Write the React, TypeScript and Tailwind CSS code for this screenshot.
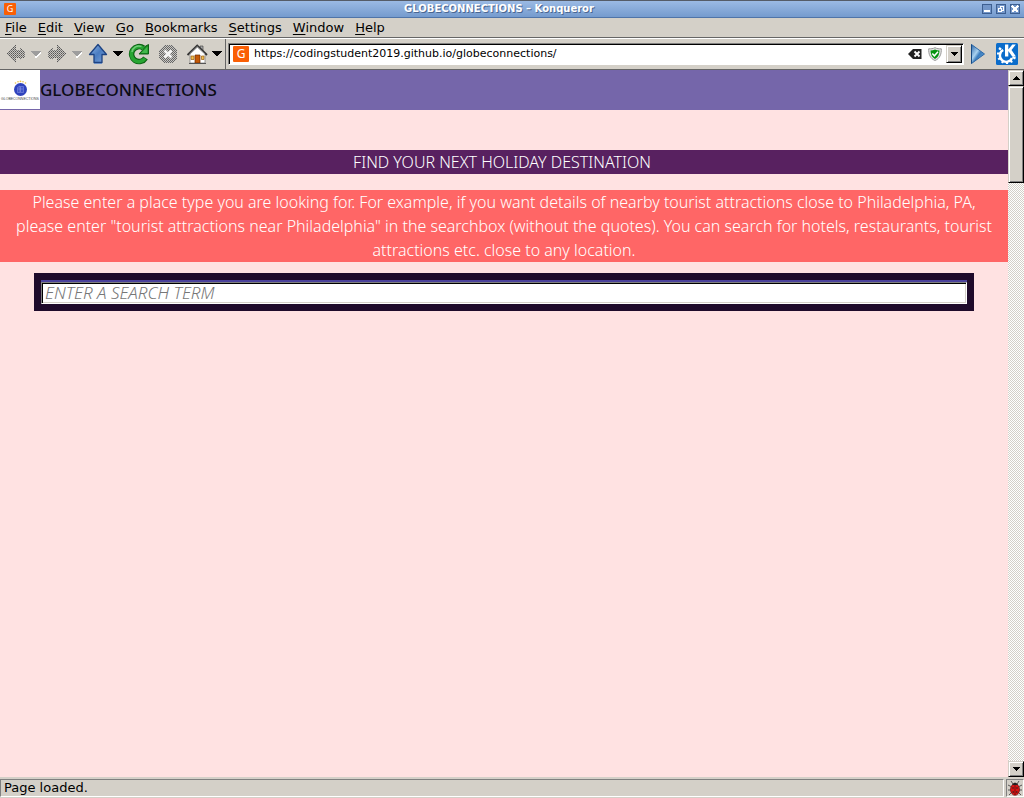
import React from "react";

type IconProps = { className?: string };

const Caret = ({ muted = false }: { muted?: boolean }) => (
  <svg viewBox="0 0 11 7" className="h-[7px] w-[11px] shrink-0" shapeRendering="crispEdges">
    {muted && <path d="M3 6L10 0V2L6 7H5Z" fill="#fff" />}
    <path d="M0 0H10L5 6Z" fill={muted ? "#9d9d9d" : "#000"} />
  </svg>
);

const BackIcon = ({ flip = false }: { flip?: boolean }) => (
  <svg viewBox="0 0 22 22" className={flip ? "size-[22px] -scale-x-100" : "size-[22px]"}>
    <defs>
      <pattern id="stipple" width="2" height="2" patternUnits="userSpaceOnUse">
        <rect width="2" height="2" fill="#c9c6c0" />
        <rect width="1" height="1" fill="#555" />
        <rect x="1" y="1" width="1" height="1" fill="#777" />
      </pattern>
    </defs>
    <path d="M1 11L11 2V7H15V5L20 8V14L15 17V15H11V20Z" fill="url(#stipple)" shapeRendering="crispEdges" />
  </svg>
);

const UpIcon = () => (
  <svg viewBox="0 0 22 22" className="size-[22px]">
    <defs>
      <linearGradient id="up" x1="0" x2="1" y1="0" y2="1">
        <stop offset="0" stopColor="#8fb6e8" />
        <stop offset=".5" stopColor="#4a7cc0" />
        <stop offset="1" stopColor="#7ba4db" />
      </linearGradient>
    </defs>
    <path d="M11 1.5L19.500 11.500H15V19.500H7V11.500H2.500Z" fill="url(#up)" stroke="#1d4382" strokeWidth="1.300" strokeLinejoin="round" />
    <path d="M7 20.500H15" stroke="#6c8fc4" />
  </svg>
);

const ReloadIcon = () => (
  <svg viewBox="0 0 22 22" className="size-[22px]">
    <path d="M17.500 15A7.500 7.500 0 1 1 15.500 5" fill="none" stroke="#0d6214" strokeWidth="5.500" />
    <path d="M20.500 1.500V11H11L14 7.800L17 3.500Z" fill="#168b20" stroke="#0d6214" strokeLinejoin="round" />
    <path d="M17 15.500A7.500 7.500 0 1 1 15.500 5.300" fill="none" stroke="#27a532" strokeWidth="3.600" />
    <path d="M4 9A7 7 0 0 1 13.500 3.500" fill="none" stroke="#71cc78" strokeWidth="1.500" />
    <path d="M19.500 3.500V10H13L16.500 6.500Z" fill="#42b94c" />
  </svg>
);

const StopIcon = () => (
  <svg viewBox="0 0 22 22" className="size-[22px]">
    <defs>
      <pattern id="stop" width="2" height="2" patternUnits="userSpaceOnUse">
        <rect width="2" height="2" fill="#c8c6c2" />
        <rect width="1" height="1" fill="#666" />
        <rect x="1" y="1" width="1" height="1" fill="#666" />
      </pattern>
    </defs>
    <path d="M7 2H15L20 7V15L15 20H7L2 15V7Z" fill="url(#stop)" shapeRendering="crispEdges" />
    <path d="M7.500 7.500L14.500 14.500M14.500 7.500L7.500 14.500" stroke="#f4f4f4" strokeWidth="2.600" />
  </svg>
);

const HomeIcon = () => (
  <svg viewBox="0 0 22 22" className="size-[22px]">
    <path d="M14 3H17V8H14Z" fill="#aaa" stroke="#333" strokeWidth=".6" />
    <path d="M4 11V20H19V11L11.500 4Z" fill="#fff" stroke="#777" strokeWidth=".7" />
    <path d="M1.500 12L11.200 2.500L21 12" fill="none" stroke="#333" strokeWidth="1.800" />
    <path d="M3.500 11L11.200 3.500L19 11" fill="none" stroke="#bbb" strokeWidth=".6" />
    <path d="M9 12H14V20H9Z" fill="#c55a08" stroke="#6b2c00" strokeWidth=".7" />
    <path d="M5 13H8V16.500H5ZM15.500 13H18V16.500H15.500Z" fill="#f0c050" stroke="#9a5b10" strokeWidth=".7" />
    <path d="M3 20.500H20" stroke="#555" />
  </svg>
);

const ClearIcon = () => (
  <svg viewBox="0 0 14 12" className="h-3 w-3.5">
    <path d="M0 6L5 1H13.500V11H5Z" fill="#222" />
    <path d="M6.500 3.500L11.500 8.500M11.500 3.500L6.500 8.500" stroke="#fff" strokeWidth="1.900" />
  </svg>
);

const ShieldIcon = () => (
  <svg viewBox="0 0 14 14" className="size-3.5">
    <path d="M7 .7C9 1.700 11 2 13.300 1.800C13.500 7 12 11.500 7 13.500C2 11.500 .5 7 .7 1.800C3 2 5 1.700 7 .7Z" fill="#e5e5e5" stroke="#999" />
    <path d="M7 2.500Q9 3.500 11.500 3.500Q11.500 9.500 7 12Q2.500 9.500 2.500 3.500Q5 3.500 7 2.500Z" fill="#069410" />
    <path d="M4.300 6.500L6.400 8.800L10 4.800" fill="none" stroke="#fff" strokeWidth="1.500" />
  </svg>
);

const PlayIcon = () => (
  <svg viewBox="0 0 16 22" className="h-[22px] w-4">
    <defs>
      <linearGradient id="play" x1="0" x2="1" y1="0" y2="1">
        <stop offset="0" stopColor="#2b65a8" />
        <stop offset=".4" stopColor="#a9d2ef" />
        <stop offset=".55" stopColor="#3c7dbd" />
        <stop offset="1" stopColor="#6fb0e2" />
      </linearGradient>
    </defs>
    <path d="M1.500 1.500L14.500 11L1.500 20.500Z" fill="url(#play)" stroke="#2c68a8" strokeLinejoin="round" />
    <path d="M1.500 1.500V20.500" stroke="#174a82" />
  </svg>
);

const KdeIcon = () => (
  <svg viewBox="0 0 22 22" className="size-[22px]">
    <rect width="22" height="22" rx="1.500" fill="#0a6ccb" />
    <path d="M7.200 7A6.300 6.300 0 1 0 16 15" fill="none" stroke="#fff" strokeWidth="2.400" />
    <path d="M5 6.500L3 5M4 10.500L1 10.500M4.800 14.500L2.200 16.500M7.500 17.200L6 20M11 18V21M14.300 16.800L16 19.500M16.500 14L19.500 15.500" stroke="#fff" strokeWidth="2.200" />
    <path d="M9 1.500H12.300V6.500L16.300 1.500H19.800L15.500 7L20 13.500H16.200L12.300 8V13.500H9Z" fill="#fff" />
  </svg>
);

const BugIcon = () => (
  <svg viewBox="0 0 16 16" className="size-4">
    <path d="M4 1L6 4M12 1L10 4M1 5L5 7M15 5L11 7M1 10H15M2 15L5 12M14 15L11 12" stroke="#555" />
    <ellipse cx="8" cy="9.500" rx="4.500" ry="5.800" fill="#d81414" stroke="#6f0808" strokeWidth=".7" />
    <path d="M5 5Q8 0 11 5Z" fill="#222" />
    <path d="M8 5V15" stroke="#6f0808" strokeWidth=".8" />
    <g fill="#222"><circle cx="6" cy="8" r=".8" /><circle cx="10" cy="8" r=".8" /><circle cx="6.200" cy="12" r=".8" /><circle cx="9.800" cy="12" r=".8" /></g>
  </svg>
);

const GlobeLogo = () => (
  <svg viewBox="0 0 40 40" className="size-10 shrink-0" role="img" aria-label="Globeconnections logo">
    <rect width="40" height="39" fill="#fff" />
    <g fill="#e9c14c"><circle cx="15.500" cy="13" r=".8" /><circle cx="18" cy="11.800" r=".8" /><circle cx="20.500" cy="11.300" r=".9" /><circle cx="23" cy="11.800" r=".8" /><circle cx="25.500" cy="13" r=".8" /></g>
    <circle cx="20.500" cy="19.500" r="6.500" fill="#2f43bd" />
    <path d="M17.500 17.500L20 16V22.500H17.500ZM20.500 16.500H23.500V22.500H20.500ZM18 19H23" fill="#3f53c8" stroke="#8d9ae6" strokeWidth=".5" />
    <text x="20" y="30" textAnchor="middle" fontSize="3.5" fill="#444" fontFamily="Liberation Sans, sans-serif">GLOBECONNECTIONS</text>
  </svg>
);

const Favicon = ({ className = "" }: IconProps) => (
  <span className={`flex shrink-0 items-center justify-center rounded-[1px] bg-[#fa5f05] font-['Noto_Sans',sans-serif] text-white ${className}`}>G</span>
);

const menus = ["File", "Edit", "View", "Go", "Bookmarks", "Settings", "Window", "Help"];

const raised = "border border-t-[#d4d0c8] border-l-[#d4d0c8] border-r-black border-b-black bg-[#d4d0c8] shadow-[inset_1px_1px_#fff,inset_-1px_-1px_#808080]";

const ToolButton = ({ label, className = "", children }: { label: string; className?: string; children: React.ReactNode }) => (
  <button type="button" aria-label={label} className={`flex shrink-0 items-center justify-center ${className}`}>{children}</button>
);

const WindowButton = ({ label, children }: { label: string; children: React.ReactNode }) => (
  <button type="button" aria-label={label} className="size-2.5 border border-[#3d5f91] bg-[#7396c9]">
    <svg viewBox="0 0 8 8" className="size-2" shapeRendering="crispEdges" fill="none" stroke="#fff">{children}</svg>
  </button>
);

export default function App() {
  return (
    <div className="flex h-screen flex-col overflow-hidden bg-[#d4d0c8] font-['DejaVu_Sans',sans-serif] text-[13px] text-black">
      <header className="flex h-[18px] shrink-0 items-center border-t border-b border-t-[#555c68] border-b-[#4f74a8] bg-linear-to-b from-[#9bbae4] to-[#759bce] px-1">
        <Favicon className="size-3 text-[9px]" />
        <h1 className="flex-1 text-center text-[10px] leading-4 font-bold text-white [text-shadow:1px_1px_#4a6691]">GLOBECONNECTIONS – Konqueror</h1>
        <div className="flex gap-1">
          <WindowButton label="Minimize"><path d="M1 6H7" strokeWidth="2" /></WindowButton>
          <WindowButton label="Restore"><path d="M3 3V1.500H6.500V5H5M1.500 3.500H4.500V6.500H1.500Z" /></WindowButton>
          <WindowButton label="Close"><path d="M1 1L7 7M7 1L1 7" strokeWidth="2" /></WindowButton>
        </div>
      </header>

      <nav className="flex h-5 shrink-0 items-center gap-[11px] border-b border-[#666] pl-[5px]">
        {menus.map((name) => (
          <button type="button" key={name} className="leading-4">
            <span className="underline underline-offset-2">{name[0]}</span>{name.slice(1)}
          </button>
        ))}
      </nav>

      <div className="flex h-8 shrink-0 items-center border-t border-b border-t-white border-b-[#666] pr-1.5">
        <div className="flex h-full w-[226px] shrink-0 items-center gap-1 border-r border-[#666] pl-[5px]">
          <ToolButton label="Back"><BackIcon /></ToolButton>
          <ToolButton label="Back history"><Caret muted /></ToolButton>
          <ToolButton label="Forward"><BackIcon flip /></ToolButton>
          <ToolButton label="Forward history"><Caret muted /></ToolButton>
          <ToolButton label="Up"><UpIcon /></ToolButton>
          <ToolButton label="Up history"><Caret /></ToolButton>
          <ToolButton label="Reload"><ReloadIcon /></ToolButton>
          <ToolButton label="Stop" className="mx-[3px]"><StopIcon /></ToolButton>
          <ToolButton label="Home"><HomeIcon /></ToolButton>
          <ToolButton label="Home options"><Caret /></ToolButton>
        </div>
        <div className="ml-0.5 flex h-[22px] min-w-0 flex-1 items-center border border-t-[#808080] border-r-white border-b-white border-l-[#808080] bg-white pr-px pl-1 shadow-[inset_1px_1px_#000]">
          <Favicon className="size-4 text-[12px]" />
          <input aria-label="Location" defaultValue="https://codingstudent2019.github.io/globeconnections/" className="ml-[5px] min-w-0 flex-1 bg-transparent text-[11px] leading-4 outline-none" />
          <ToolButton label="Clear location" className="mr-1.5"><ClearIcon /></ToolButton>
          <ToolButton label="Security" className="mr-1"><ShieldIcon /></ToolButton>
          <button type="button" aria-label="Location history" className={`flex h-[18px] w-4 items-center justify-center ${raised}`}>
            <svg viewBox="0 0 8 4" className="h-1 w-2" shapeRendering="crispEdges"><path d="M0 0H8L4 4Z" /></svg>
          </button>
        </div>
        <ToolButton label="Go" className="mr-2.5 ml-1.5"><PlayIcon /></ToolButton>
        <ToolButton label="KDE"><KdeIcon /></ToolButton>
      </div>

      <div className="flex min-h-0 flex-1">
        <main className="min-w-0 flex-1 overflow-hidden bg-[#ffe2e2] font-['Noto_Sans',sans-serif] text-base leading-6">
          <div className="flex h-10 items-center bg-[#7566aa]">
            <GlobeLogo />
            <h2 className="text-[17px] leading-6 font-medium text-[#0c0c14]">GLOBECONNECTIONS</h2>
          </div>
          <h3 className="mt-10 bg-[#582160] pr-1 text-center font-light text-white">FIND YOUR NEXT HOLIDAY DESTINATION</h3>
          <p className="mt-4 bg-[#ff6666] px-4 text-center font-light text-white">
            Please enter a place type you are looking for. For example, if you want details of nearby tourist attractions close to Philadelphia, PA, please enter "tourist attractions near Philadelphia" in the searchbox (without the quotes). You can search for hotels, restaurants, tourist attractions etc. close to any location.
          </p>
          <div className="mx-[34px] mt-[11px] bg-[#1f0b2b] p-[7px]">
            <div className="bg-[#4a419b] pt-0.5">
              <input aria-label="Search term" placeholder="ENTER A SEARCH TERM" className="block h-[22px] w-full border border-t-[#808080] border-r-white border-b-white border-l-[#808080] bg-white px-[3px] text-[17px] font-light italic shadow-[inset_1px_1px_#000,inset_-1px_-1px_#d4d0c8] outline-none placeholder:text-[#777]" />
            </div>
          </div>
        </main>
        <aside aria-label="Scrollbar" className="flex w-4 shrink-0 flex-col bg-[conic-gradient(#fff_25%,#d4d0c8_0_50%,#fff_0_75%,#d4d0c8_0)] bg-size-[2px_2px]">
          <button type="button" aria-label="Scroll up" className={`flex h-4 items-center justify-center ${raised}`}>
            <svg viewBox="0 0 8 4" className="h-1 w-2" shapeRendering="crispEdges"><path d="M0 4H8L4 0Z" /></svg>
          </button>
          <div className={`h-[97px] ${raised}`} />
          <button type="button" aria-label="Scroll down" className={`mt-auto flex h-4 items-center justify-center ${raised}`}>
            <svg viewBox="0 0 8 4" className="h-1 w-2" shapeRendering="crispEdges"><path d="M0 0H8L4 4Z" /></svg>
          </button>
        </aside>
      </div>

      <footer className="flex h-[21px] shrink-0 gap-0.5 pt-0.5 pb-px">
        <div className="flex flex-1 items-center border border-t-[#808080] border-r-white border-b-white border-l-[#808080] pl-[3px] leading-4">Page loaded.</div>
        <div className="flex w-[18px] items-center justify-center border border-t-[#808080] border-r-white border-b-white border-l-[#808080]"><BugIcon /></div>
      </footer>
    </div>
  );
}
